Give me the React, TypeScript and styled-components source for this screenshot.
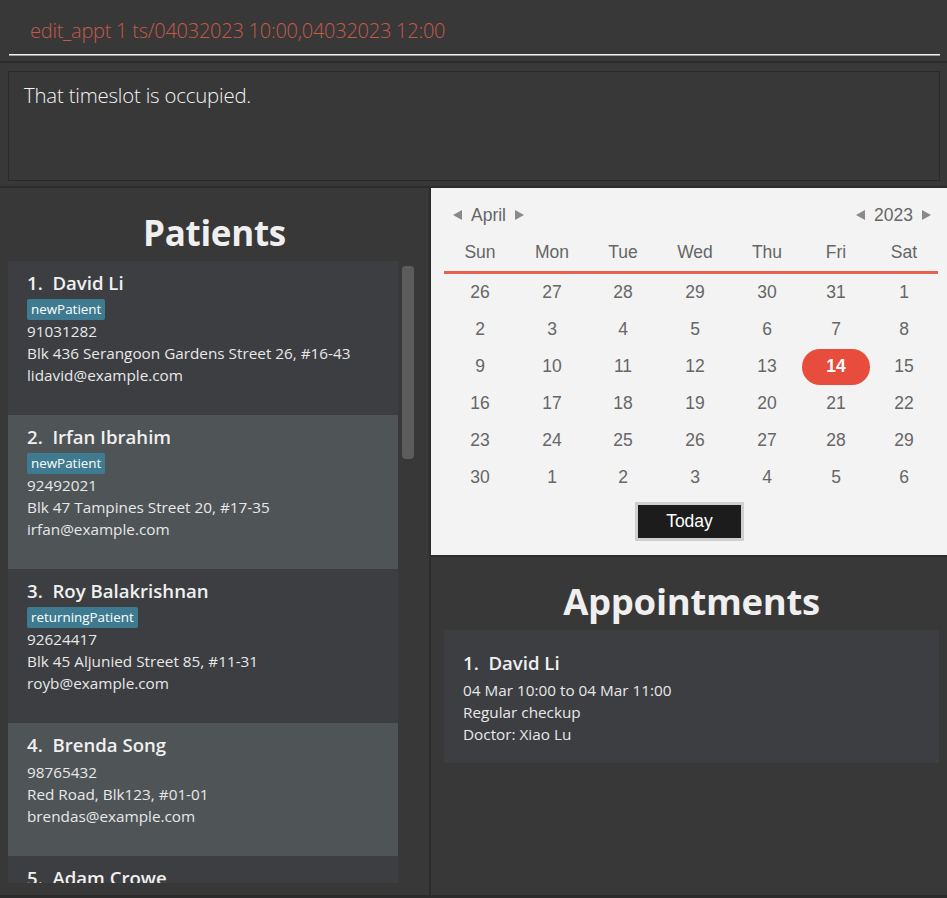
import styled, { createGlobalStyle } from "styled-components";

const GlobalStyle = createGlobalStyle`
  html, body {
    margin: 0;
    padding: 0;
    background: #383838;
  }
  body {
    font-family: "Open Sans", "Noto Sans", sans-serif;
  }
`;

type Patient = {
  name: string;
  tag?: string;
  phone: string;
  address: string;
  email: string;
};

const patients: Patient[] = [
  {
    name: "David Li",
    tag: "newPatient",
    phone: "91031282",
    address: "Blk 436 Serangoon Gardens Street 26, #16-43",
    email: "lidavid@example.com",
  },
  {
    name: "Irfan Ibrahim",
    tag: "newPatient",
    phone: "92492021",
    address: "Blk 47 Tampines Street 20, #17-35",
    email: "irfan@example.com",
  },
  {
    name: "Roy Balakrishnan",
    tag: "returningPatient",
    phone: "92624417",
    address: "Blk 45 Aljunied Street 85, #11-31",
    email: "royb@example.com",
  },
  {
    name: "Brenda Song",
    phone: "98765432",
    address: "Red Road, Blk123, #01-01",
    email: "brendas@example.com",
  },
  {
    name: "Adam Crowe",
    phone: "",
    address: "",
    email: "",
  },
];

const weekdays = ["Sun", "Mon", "Tue", "Wed", "Thu", "Fri", "Sat"];
const days = [
  26, 27, 28, 29, 30, 31, 1,
  2, 3, 4, 5, 6, 7, 8,
  9, 10, 11, 12, 13, 14, 15,
  16, 17, 18, 19, 20, 21, 22,
  23, 24, 25, 26, 27, 28, 29,
  30, 1, 2, 3, 4, 5, 6,
];

export default function App() {
  return (
    <>
      <GlobalStyle />
      <Window>
        <CommandBar>
          <CommandText>edit_appt 1 ts/04032023 10:00,04032023 12:00</CommandText>
          <Underline />
        </CommandBar>
        <ResultArea>
          <ResultBox>That timeslot is occupied.</ResultBox>
        </ResultArea>
        <Main>
          <LeftPanel>
            <PanelTitle>Patients</PanelTitle>
            <ListWrap>
              <List>
                {patients.map((p, i) => (
                  <Card key={p.name} alt={i % 2 === 1}>
                    <Name>
                      {i + 1}.&nbsp; {p.name}
                    </Name>
                    {p.tag && <Tag>{p.tag}</Tag>}
                    {p.phone && <Line>{p.phone}</Line>}
                    {p.address && <Line>{p.address}</Line>}
                    {p.email && <Line>{p.email}</Line>}
                  </Card>
                ))}
              </List>
              <ScrollTrack>
                <ScrollThumb />
              </ScrollTrack>
            </ListWrap>
          </LeftPanel>
          <RightPanel>
            <Calendar>
              <NavRow>
                <NavGroup>
                  <Arrow dir="left" />
                  <NavLabel>April</NavLabel>
                  <Arrow dir="right" />
                </NavGroup>
                <NavGroup>
                  <Arrow dir="left" />
                  <NavLabel>2023</NavLabel>
                  <Arrow dir="right" />
                </NavGroup>
              </NavRow>
              <DayGrid>
                {weekdays.map((w) => (
                  <WeekdayCell key={w}>{w}</WeekdayCell>
                ))}
                {days.map((d, i) => (
                  <DayCell key={i}>
                    {d === 14 && i === 19 ? <Selected>14</Selected> : d}
                  </DayCell>
                ))}
              </DayGrid>
              <TodayRow>
                <TodayButton>Today</TodayButton>
              </TodayRow>
            </Calendar>
            <AppointmentPanel>
              <PanelTitle small>Appointments</PanelTitle>
              <ApptCard>
                <Name>1.&nbsp; David Li</Name>
                <Line>04 Mar 10:00 to 04 Mar 11:00</Line>
                <Line>Regular checkup</Line>
                <Line>Doctor: Xiao Lu</Line>
              </ApptCard>
            </AppointmentPanel>
          </RightPanel>
        </Main>
      </Window>
    </>
  );
}

const Window = styled.div`
  width: 947px;
  height: 898px;
  display: flex;
  flex-direction: column;
  background: #383838;
  overflow: hidden;
`;

const CommandBar = styled.div`
  height: 63px;
  padding: 0 7px 0 9px;
  display: flex;
  flex-direction: column;
  border-bottom: 2px solid #2c2c2c;
  box-sizing: border-box;
  flex-shrink: 0;
`;

const CommandText = styled.div`
  color: #c65a48;
  font-size: 20px;
  font-weight: 300;
  line-height: 26px;
  padding: 18px 0 0 21px;
  height: 36px;
  letter-spacing: -0.25px;
`;

const Underline = styled.div`
  height: 2px;
  background: linear-gradient(#f2f2f2 50%, #9a9a9a 50%);
`;

const ResultArea = styled.div`
  height: 125px;
  padding: 8px 7px 5px 8px;
  box-sizing: border-box;
  border-bottom: 2px solid #2c2c2c;
  flex-shrink: 0;
`;

const ResultBox = styled.div`
  height: 110px;
  box-sizing: border-box;
  border: 1px solid #2a2a2a;
  padding: 8px 15px;
  color: #f4f4f4;
  font-size: 20.4px;
  font-weight: 300;
  line-height: 30px;
  letter-spacing: -0.2px;
`;

const Main = styled.div`
  flex: 1;
  display: flex;
  border-bottom: 3px solid #2c2c2c;
  min-height: 0;
`;

const LeftPanel = styled.div`
  width: 431px;
  box-sizing: border-box;
  border-right: 2px solid #2b2b2b;
  display: flex;
  flex-direction: column;
  padding: 0 0 12px 8px;
  flex-shrink: 0;
`;

const PanelTitle = styled.div<{ small?: boolean }>`
  color: #efefef;
  font-size: ${(p) => (p.small ? "36.5px" : "35px")};
  font-weight: 700;
  text-align: center;
  line-height: 48px;
  padding: ${(p) => (p.small ? "20px 0 5px" : "21px 0 4px")};
  letter-spacing: -0.3px;
  margin-left: ${(p) => (p.small ? "0" : "-8px")};
`;

const ListWrap = styled.div`
  flex: 1;
  display: flex;
  min-height: 0;
`;

const List = styled.div`
  width: 390px;
  overflow: hidden;
  display: flex;
  flex-direction: column;
`;

const Card = styled.div<{ alt?: boolean }>`
  flex-shrink: 0;
  background: ${(p) => (p.alt ? "#4f5457" : "#3c3e41")};
  padding: 10px 19px 29px;
  display: flex;
  flex-direction: column;
  align-items: flex-start;
`;

const Name = styled.div`
  color: #f0f0f0;
  font-size: 18.6px;
  font-weight: 600;
  line-height: 24px;
  margin-bottom: 4px;
  white-space: pre;
`;

const Tag = styled.span`
  background: #3e7b91;
  color: #ffffff;
  font-size: 13.4px;
  line-height: 21px;
  padding: 0 4px;
  border-radius: 2px;
`;

const Line = styled.div`
  color: #e8e8e8;
  font-size: 15.3px;
  line-height: 22px;
`;

const ScrollTrack = styled.div`
  width: 12px;
  margin-left: 4px;
  padding-top: 5px;
`;

const ScrollThumb = styled.div`
  height: 193px;
  border-radius: 4px;
  background: #5c5c5c;
`;

const RightPanel = styled.div`
  flex: 1;
  display: flex;
  flex-direction: column;
`;

const Calendar = styled.div`
  background: #f3f3f3;
  height: 369px;
  box-sizing: border-box;
  padding: 15px 9px 0 13px;
  font-family: "Liberation Sans", Arial, sans-serif;
  color: #666666;
  border-bottom: 2px solid #2c2c2c;
  flex-shrink: 0;
`;

const NavRow = styled.div`
  display: flex;
  justify-content: space-between;
  height: 24px;
  padding: 0 7px 0 9px;
`;

const NavGroup = styled.div`
  display: flex;
  align-items: center;
  gap: 9px;
`;

const NavLabel = styled.span`
  font-size: 17.5px;
  color: #666666;
`;

const Arrow = styled.span<{ dir: "left" | "right" }>`
  width: 0;
  height: 0;
  border-top: 5px solid transparent;
  border-bottom: 5px solid transparent;
  ${(p) =>
    p.dir === "left"
      ? "border-right: 9px solid #8a8a8a;"
      : "border-left: 9px solid #8a8a8a;"}
`;

const DayGrid = styled.div`
  display: grid;
  grid-template-columns: 72px 72px 70px 74px 70px 68px 68px;
  margin-top: 10px;
`;

const WeekdayCell = styled.div`
  height: 34px;
  text-align: center;
  line-height: 30px;
  font-size: 17.5px;
  border-bottom: 3px solid #e8604f;
`;

const DayCell = styled.div`
  height: 37px;
  display: flex;
  align-items: center;
  justify-content: center;
  font-size: 17.5px;
`;

const Selected = styled.span`
  width: 68px;
  height: 36px;
  border-radius: 18px;
  background: #e74c3c;
  color: #ffffff;
  font-weight: 700;
  display: flex;
  align-items: center;
  justify-content: center;
`;

const TodayRow = styled.div`
  display: flex;
  justify-content: center;
  margin-top: 6px;
  padding-right: 3px;
`;

const TodayButton = styled.div`
  width: 109px;
  height: 39px;
  box-sizing: border-box;
  border: 3px solid #cfcfcf;
  background: #1c1c1c;
  color: #ffffff;
  font-size: 17.5px;
  display: flex;
  align-items: center;
  justify-content: center;
`;

const AppointmentPanel = styled.div`
  flex: 1;
  padding: 0 8px 0 13px;
  display: flex;
  flex-direction: column;
`;

const ApptCard = styled.div`
  background: #3c3e41;
  padding: 21px 19px 18px;
`;
